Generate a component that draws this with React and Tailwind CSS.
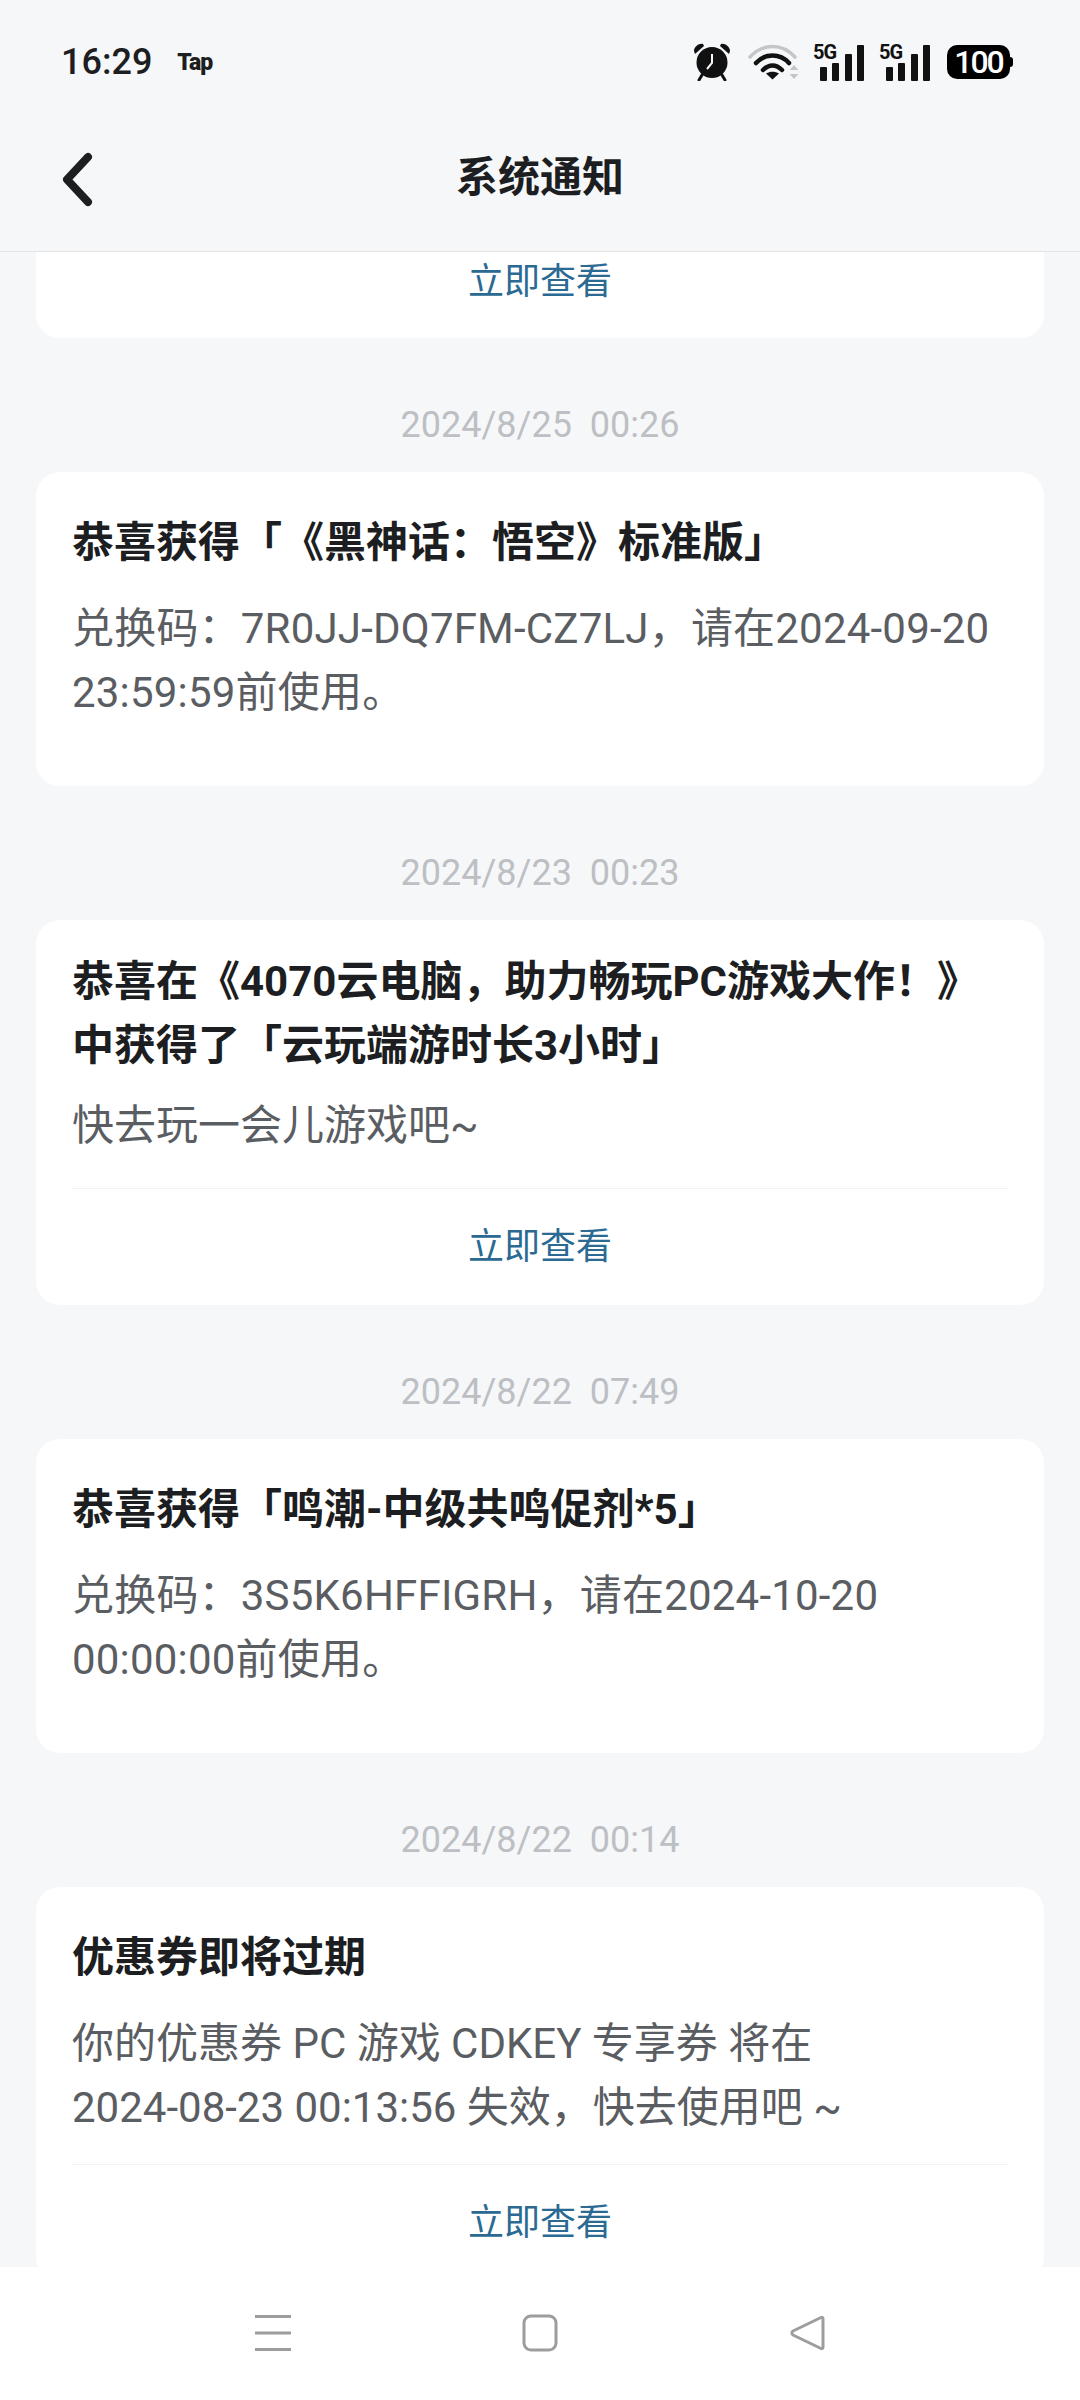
import React from "react";

const cjk = `"Roboto", "Noto Sans CJK SC", sans-serif`;

const notices = [
  {
    time: "2024/8/25  00:26",
    title: ["恭喜获得「《黑神话：悟空》标准版」"],
    body: ["兑换码：7R0JJ-DQ7FM-CZ7LJ，请在2024-09-20", "23:59:59前使用。"],
    code: true,
  },
  {
    time: "2024/8/23  00:23",
    title: ["恭喜在《4070云电脑，助力畅玩PC游戏大作！》", "中获得了「云玩端游时长3小时」"],
    body: ["快去玩一会儿游戏吧~"],
    action: "mt-[30px]",
  },
  {
    time: "2024/8/22  07:49",
    title: ["恭喜获得「鸣潮-中级共鸣促剂*5」"],
    body: ["兑换码：3S5K6HFFIGRH，请在2024-10-20", "00:00:00前使用。"],
    code: true,
  },
  {
    time: "2024/8/22  00:14",
    title: ["优惠券即将过期"],
    body: ["你的优惠券 PC 游戏 CDKEY 专享券 将在", "2024-08-23 00:13:56 失效，快去使用吧 ~"],
    action: "mt-[24px]",
  },
];

const Signal = ({ className }) => (
  <div className={`relative h-[37px] w-[51px] ${className}`}>
    <span className="absolute left-0 top-[-2px] text-[20px] font-bold leading-none tracking-[-1px] text-[#111]">5G</span>
    <div className="absolute bottom-0 right-0 flex items-end gap-[5.5px]">
      <div className="h-[14px] w-[7px] rounded-[1px] bg-[#111]" />
      <div className="h-[18px] w-[7px] rounded-[1px] bg-[#111]" />
      <div className="h-[27px] w-[7px] rounded-[1px] bg-[#111]" />
      <div className="h-[36px] w-[7px] rounded-[1px] bg-[#111]" />
    </div>
  </div>
);

const StatusIcons = () => (
  <div className="flex items-center">
    {/* alarm */}
    <svg width="38" height="38" viewBox="0 0 38 38">
      <circle cx="19" cy="19.5" r="15.5" fill="#111" />
      <path d="M19 11v9l-5 6" stroke="#f6f7f9" strokeWidth="2" fill="none" />
      <path d="M1 8c0-4 5-8 9-7l1 2-9 8zM37 8c0-4-5-8-9-7l-1 2 9 8z" fill="#111" />
      <path d="M9 32l-3 5M29 32l3 5" stroke="#111" strokeWidth="3" strokeLinecap="round" />
    </svg>
    {/* wifi */}
    <svg width="51" height="36" viewBox="0 0 51 36" className="ml-[17px]" fill="none" strokeLinecap="round">
      <path d="M2 13C15 -1 34 -1 47 13" stroke="#c6c6c6" strokeWidth="3.5" />
      <path d="M8 19C17 9 32 9 41 19" stroke="#111" strokeWidth="4.5" />
      <path d="M15 26c6-6 13-6 19 0" stroke="#111" strokeWidth="4.5" />
      <path d="M18 29.5c4-2.500 9-2.500 13 0l-6.500 6z" fill="#111" />
      <path d="M46 21l4.500 5h-9zM46 35l4.500-5h-9z" fill="#c6c6c6" />
    </svg>
    <Signal className="ml-[14px]" />
    <Signal className="ml-[15px]" />
    {/* battery */}
    <div className="ml-[17px] flex items-center">
      <div className="flex h-[34px] w-[63px] items-center justify-center rounded-[10px] bg-black text-[32px] font-medium leading-none tracking-[-2px] text-white">
        100
      </div>
      <div className="h-[10px] w-[3px] rounded-r-sm bg-black" />
    </div>
  </div>
);

export default function App() {
  return (
    <div
      className="flex h-[2400px] w-[1080px] flex-col overflow-hidden bg-[#f6f7f9] [text-spacing-trim:space-all]"
      style={{ fontFamily: cjk }}
    >
      {/* status bar */}
      <div className="flex h-[122px] items-center justify-between pl-[61px] pr-[67px] pt-[2px]">
        <div className="flex items-center gap-[25px]">
          <span className="text-[36px] font-medium leading-none text-[#1c1e21]">16:29</span>
          <span className="text-[23px] font-black leading-none tracking-[-1px] text-[#1c1e21]">Tap</span>
        </div>
        <StatusIcons />
      </div>

      {/* header */}
      <div className="relative flex h-[130px] items-center justify-center border-b border-[#e2e4e6] pb-[18px]">
        <button className="absolute left-[60px] top-[28px]">
          <svg width="34" height="60" viewBox="0 0 34 60" fill="none" stroke="#1c1e21" strokeWidth="8" strokeLinecap="round" strokeLinejoin="round">
            <path d="M28 7L7 29.500L28 52" />
          </svg>
        </button>
        <h1 className="text-[42px] font-bold text-[#1c1e21]">系统通知</h1>
      </div>

      {/* list */}
      <div className="flex-1 overflow-hidden px-[36px]">
        <div className="flex h-[86px] items-center justify-center rounded-b-[24px] bg-white pb-[26px] text-[36px] text-[#2b6a93]">
          立即查看
        </div>

        {notices.map((n) => (
          <div key={n.time}>
            <div className="flex h-[134px] items-center justify-center whitespace-pre pt-[40px] text-[36px] text-[#bcbfc4]">
              {n.time}
            </div>
            <div className="rounded-[24px] bg-white">
              <div className={`px-[36px] ${n.title.length > 1 ? "pt-[30px]" : "pt-[39px]"}`}>
                {n.title.map((t) => (
                  <div key={t} className="whitespace-nowrap text-[42px] font-bold leading-[64px] text-[#1c1e21]">{t}</div>
                ))}
                <div className={n.title.length > 1 ? "pt-[16px]" : "pt-[22px]"}>
                  {n.body.map((b) => (
                    <div
                      key={b}
                      className={`whitespace-pre text-[42px] leading-[64px] text-[#5a5d61] ${n.code ? "tracking-[0.2px]" : ""}`}
                    >
                      {b}
                    </div>
                  ))}
                </div>
              </div>
              {n.action ? (
                <>
                  <div className={`mx-[36px] border-t border-[#f1f2f3] ${n.action}`} />
                  <div className="flex h-[116px] items-center justify-center text-[36px] text-[#2b6a93]">立即查看</div>
                </>
              ) : (
                <div className="h-[61px]" />
              )}
            </div>
          </div>
        ))}
      </div>

      {/* nav bar */}
      <div className="flex h-[133px] items-center justify-center gap-[231px] bg-white pb-[1px]">
        <svg width="36" height="38" viewBox="0 0 36 38" fill="#9d9d9d">
          <rect y="1" width="36" height="3" />
          <rect y="17.500" width="36" height="3" />
          <rect y="34" width="36" height="3" />
        </svg>
        <svg width="36" height="38" viewBox="0 0 36 38" fill="none" stroke="#9d9d9d" strokeWidth="3">
          <rect x="2" y="2" width="32" height="34" rx="7" />
        </svg>
        <svg width="36" height="38" viewBox="0 0 36 38" fill="none" stroke="#9d9d9d" strokeWidth="3" strokeLinejoin="round">
          <path d="M32 3.500C33 3 34 3.500 34 5V33C34 34.500 33 35 32 34.500L4 21C2.500 20 2.500 18 4 17z" />
        </svg>
      </div>
    </div>
  );
}
